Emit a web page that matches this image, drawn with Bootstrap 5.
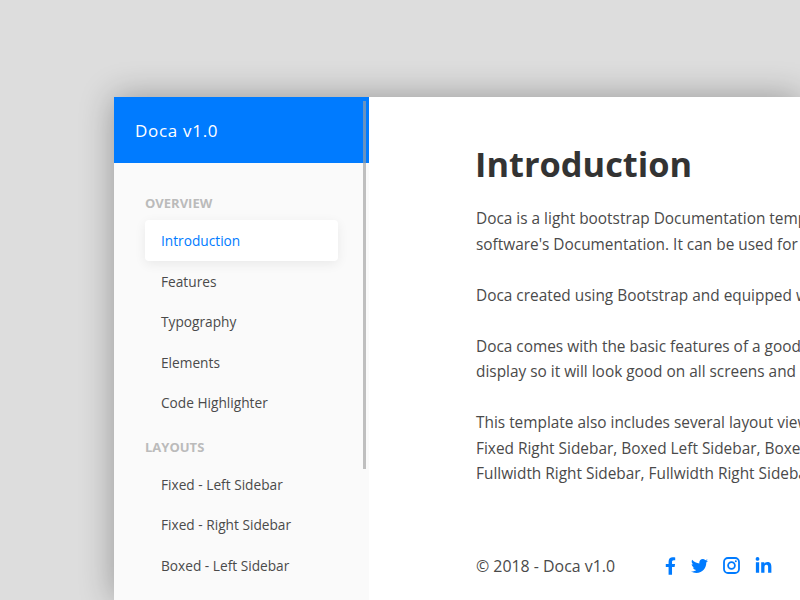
<!DOCTYPE html>
<html lang="en">
<head>
<meta charset="utf-8">
<title>Doca v1.0</title>
<link href="https://cdn.jsdelivr.net/npm/bootstrap@5.3.0/dist/css/bootstrap.min.css" rel="stylesheet">
<style>
html,body{height:600px;overflow:hidden}
body{background:#ddd;font-family:"Open Sans","Noto Sans",sans-serif;color:#4a4a4a;padding:97px 0 0 114px}
.doc-window{width:686px;height:503px;background:#fff;box-shadow:0 0 32px rgba(0,0,0,.32);position:relative}
.doc-side{width:255px;flex:none;background:#fafafa;overflow:hidden}
.doc-brand{height:66px;background:#007bff;color:#fff;font-size:17px;letter-spacing:.7px;padding:2px 0 0 21px}
.doc-thumb{position:absolute;left:249px;top:4px;width:3px;height:368px;background:rgba(160,160,160,.65)}
.doc-nav{padding:29px 31px 0}
.doc-label{font-size:13px;font-weight:700;color:#bbb;line-height:22px;margin:0;text-transform:uppercase}
.doc-nav .nav-link{color:#4a4a4a;font-size:13.7px;line-height:24.5px;padding:9px 16px 7px;border-radius:4px;width:193px}
.doc-nav .nav-link.active{color:#007bff;background:#fff;box-shadow:0 3px 12px rgba(0,0,0,.07)}
.doc-group{margin-bottom:13px;margin-top:6px}
.doc-main{padding:41px 0 0 107px;min-width:0;flex:1;overflow:hidden}
.doc-title{font-size:34.4px;font-weight:700;color:#333;line-height:52px;margin:0 0 16px -1px}
.doc-main p{font-size:15.4px;line-height:25.5px;margin:0 0 25.5px;white-space:nowrap}
.doc-foot{margin-top:67px;width:296px;font-size:15.9px;height:24px}
.doc-copy{padding-top:2px}
.doc-social{gap:15px;color:#007bff}
.doc-social svg{display:block;fill:currentColor}
</style>
</head>
<body>
<div class="doc-window d-flex">
  <aside class="doc-side">
    <div class="doc-brand d-flex align-items-center">Doca v1.0</div>
    <div class="doc-nav">
      <h6 class="doc-label">Overview</h6>
      <nav class="nav flex-column doc-group">
        <a class="nav-link active" href="#">Introduction</a>
        <a class="nav-link" href="#">Features</a>
        <a class="nav-link" href="#">Typography</a>
        <a class="nav-link" href="#">Elements</a>
        <a class="nav-link" href="#">Code Highlighter</a>
      </nav>
      <h6 class="doc-label">Layouts</h6>
      <nav class="nav flex-column doc-group">
        <a class="nav-link" href="#">Fixed - Left Sidebar</a>
        <a class="nav-link" href="#">Fixed - Right Sidebar</a>
        <a class="nav-link" href="#">Boxed - Left Sidebar</a>
      </nav>
    </div>
  </aside>
  <div class="doc-thumb"></div>
  <main class="doc-main">
    <h1 class="doc-title">Introduction</h1>
    <p>Doca is a light bootstrap Documentation template<br>software's Documentation. It can be used for any</p>
    <p>Doca created using Bootstrap and equipped with</p>
    <p>Doca comes with the basic features of a good<br>display so it will look good on all screens and</p>
    <p>This template also includes several layout views<br>Fixed Right Sidebar, Boxed Left Sidebar, Boxed<br>Fullwidth Right Sidebar, Fullwidth Right Sidebar</p>
    <footer class="doc-foot d-flex align-items-center justify-content-between">
      <span class="doc-copy">© 2018 - Doca v1.0</span>
      <div class="doc-social d-flex align-items-center">
        <svg width="11" height="18" viewBox="0 0 320 512"><path d="M279.14 288l14.22-92.66h-88.91v-60.13c0-25.35 12.42-50.06 52.24-50.06h40.42V6.26S260.43 0 225.36 0c-73.22 0-121.08 44.38-121.08 124.72v70.62H22.89V288h81.39v224h100.17V288z"/></svg>
        <svg width="17" height="18" viewBox="0 0 512 512"><path d="M459.37 151.716c.325 4.548.325 9.097.325 13.645 0 138.72-105.583 298.558-298.558 298.558-59.452 0-114.68-17.219-161.137-47.106 8.447.974 16.568 1.299 25.34 1.299 49.055 0 94.213-16.568 130.274-44.832-46.132-.975-84.792-31.188-98.112-72.772 6.498.974 12.995 1.624 19.818 1.624 9.421 0 18.843-1.3 27.614-3.573-48.081-9.747-84.143-51.98-84.143-102.985v-1.299c13.969 7.797 30.214 12.67 47.431 13.319-28.264-18.843-46.781-51.005-46.781-87.391 0-19.492 5.197-37.36 14.294-52.954 51.655 63.675 129.3 105.258 216.365 109.807-1.624-7.797-2.599-15.918-2.599-24.04 0-57.828 46.782-104.934 104.934-104.934 30.213 0 57.502 12.67 76.67 33.137 23.715-4.548 46.456-13.32 66.599-25.34-7.798 24.366-24.366 44.833-46.132 57.827 21.117-2.273 41.584-8.122 60.426-16.243-14.292 20.791-32.161 39.308-52.628 54.253z"/></svg>
        <svg width="17" height="17" viewBox="0 0 17 17"><rect x="1" y="1" width="15" height="15" rx="4" fill="none" stroke="currentColor" stroke-width="1.8"/><circle cx="8.5" cy="8.5" r="3.4" fill="none" stroke="currentColor" stroke-width="1.8"/><circle cx="12.8" cy="4.2" r="1"/></svg>
        <svg width="17" height="18" viewBox="0 0 448 512"><path d="M100.28 448H7.4V148.9h92.88zM53.79 108.1C24.09 108.1 0 83.5 0 53.8a53.79 53.79 0 0 1 107.58 0c0 29.7-24.1 54.3-53.79 54.3zM447.9 448h-92.68V302.4c0-34.7-.7-79.2-48.29-79.2-48.29 0-55.69 37.7-55.69 76.7V448h-92.78V148.9h89.08v40.8h1.3c12.4-23.5 42.69-48.3 87.88-48.3 94 0 111.28 61.9 111.28 142.3V448z"/></svg>
      </div>
    </footer>
  </main>
</div>
<script src="https://cdn.jsdelivr.net/npm/bootstrap@5.3.0/dist/js/bootstrap.bundle.min.js"></script>
</body>
</html>
